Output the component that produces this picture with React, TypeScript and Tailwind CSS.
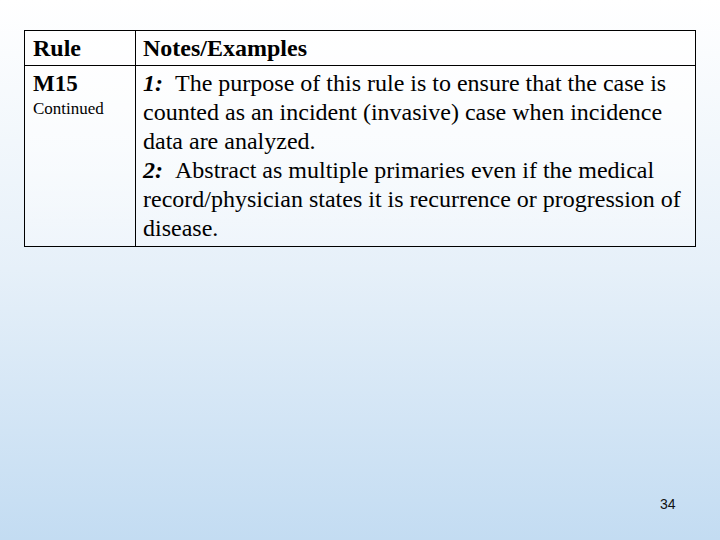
const notes = [
  { n: "1:", lines: ["The purpose of this rule is to ensure that the case is", "counted as an incident (invasive) case when incidence", "data are analyzed."] },
  { n: "2:", lines: ["Abstract as multiple primaries even if the medical", "record/physician states it is recurrence or progression of", "disease."] },
];

export default function App() {
  return (
    <div className="relative h-[540px] w-[720px] overflow-hidden bg-gradient-to-b from-white via-[#e6f0f9] to-[#c3dcf2] font-['Liberation_Serif',serif] text-black">
      <div className="px-6 pt-[30px]">
        <div className="grid grid-cols-[111px_1fr] border border-black bg-gradient-to-b from-white/90 to-white/30">
          <div className="flex h-[35px] items-center border-r border-b border-black px-2 text-[24px] font-bold">
            Rule
          </div>
          <div className="flex h-[35px] items-center border-b border-black px-[7px] text-[24px] font-bold">
            Notes/Examples
          </div>
          <div className="border-r border-black px-2 pt-[3px]">
            <div className="text-[23px] font-bold leading-[30px]">M15</div>
            <div className="text-[17px] leading-[20px]">Continued</div>
          </div>
          <div className="px-[7px] pt-[3px] pb-[3px] text-[24px] leading-[29px] whitespace-nowrap">
            {notes.map((note) =>
              note.lines.map((line, i) => (
                <div key={note.n + i}>
                  {i === 0 && <span className="font-bold italic">{note.n}&nbsp; </span>}
                  {line}
                </div>
              ))
            )}
          </div>
        </div>
      </div>
      <div className="absolute left-[660px] top-[494px] font-['Liberation_Sans',sans-serif] text-[14px] text-[#111]">
        34
      </div>
    </div>
  );
}
